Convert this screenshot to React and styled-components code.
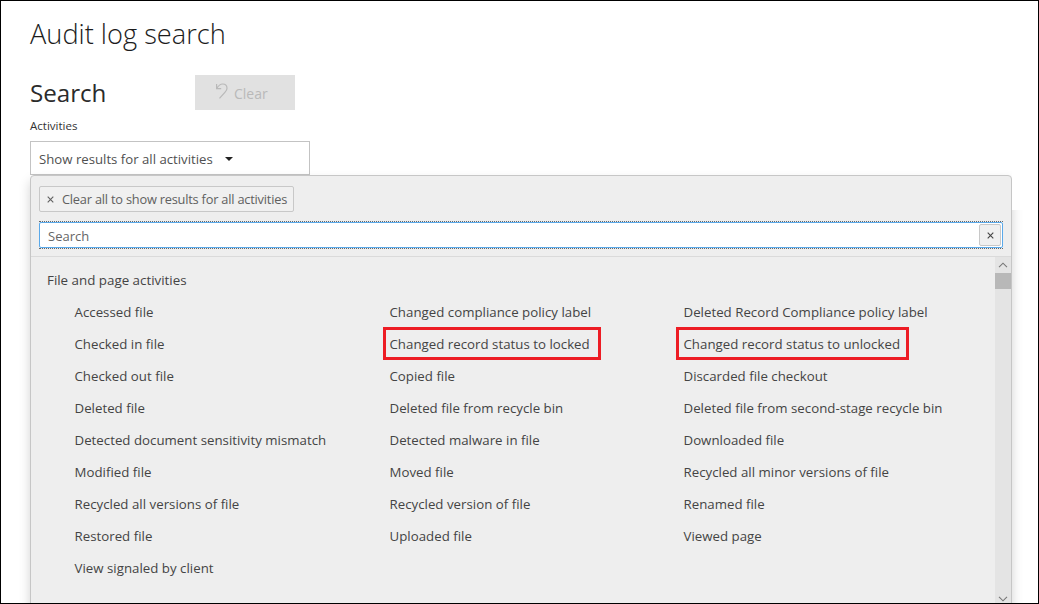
import React from "react";
import styled, { createGlobalStyle } from "styled-components";

const Global = createGlobalStyle`
  * { box-sizing: border-box; }
  body { margin: 0; background: #fff; font-family: "Open Sans", "Noto Sans", sans-serif; }
  button, input { font-family: inherit; margin: 0; }
`;

const Frame = styled.main`
  display: flex;
  flex-direction: column;
  width: 1039px;
  height: 604px;
  padding: 16px 26px 0 29px;
  overflow: hidden;
  border: 1px solid #000;
  background: #fff;
`;

const Title = styled.h1`
  margin: 0;
  height: 34px;
  line-height: 34px;
  font-size: 27.2px;
  font-weight: 300;
  color: #1c1c1c;
`;

const HeadingRow = styled.div`
  display: flex;
  height: 35px;
  margin-top: 24px;
`;

const Heading = styled.h2`
  margin: 0;
  width: 165px;
  line-height: 35px;
  font-size: 24.2px;
  font-weight: 400;
  letter-spacing: -0.05px;
  color: #2b2b2b;
`;

const ClearButton = styled.button`
  display: flex;
  align-items: center;
  width: 100px;
  height: 35px;
  padding: 0 0 0 20px;
  gap: 5px;
  border: 0;
  background: #e1e1e1;
  color: #b9b9b9;
  font-size: 14px;
  line-height: 20px;
  svg { margin-top: -3px; }
  span { padding-top: 3px; }
`;

const Label = styled.label`
  height: 16px;
  margin-top: 8px;
  line-height: 16px;
  font-size: 11.5px;
  color: #333;
`;

const Select = styled.button`
  display: flex;
  align-items: center;
  flex: none;
  width: 280px;
  height: 34px;
  margin-top: 7px;
  padding: 2px 0 0 8px;
  border: 1px solid #c3c3c3;
  background: #fff;
  color: #505050;
  font-size: 13.2px;
  line-height: 20px;
  svg { margin-left: 12px; }
`;

const Panel = styled.section`
  position: relative;
  display: flex;
  flex-direction: column;
  flex: none;
  width: 982px;
  height: 440px;
  border: 1px solid #c6c6c6;
  border-radius: 4px 4px 0 0;
  background: #eee;
  box-shadow: 0 6px 12px rgba(0, 0, 0, 0.175);
`;

const ShadowMask = styled.div`
  position: absolute;
  top: -6px;
  left: 981px;
  width: 20px;
  height: 40px;
  background: #fff;
`;

const Toolbar = styled.header`
  height: 81px;
  flex: none;
  padding: 10px 8px 0;
  border-bottom: 1px solid #dadada;
`;

const ClearAll = styled.button`
  display: flex;
  align-items: center;
  width: 255px;
  height: 26px;
  padding: 0 0 0 7px;
  gap: 8px;
  border: 1px solid #c8c8c8;
  border-radius: 2px;
  background: #f0f0f0;
  color: #606060;
  font-size: 12.8px;
  line-height: 20px;
  letter-spacing: -0.21px;
  white-space: nowrap;
`;

const SearchBox = styled.div`
  display: flex;
  width: 964px;
  height: 28px;
  margin-top: 9px;
  border: dotted #666;
  border-width: 1px 0;
`;

const SearchField = styled.div`
  display: flex;
  align-items: center;
  flex: 1;
  padding: 0 1px 0 8px;
  border: 1px solid #5aa9ea;
  border-radius: 2px;
  background: #fff;
`;

const SearchInput = styled.input`
  flex: 1;
  height: 22px;
  padding: 2px 0 0;
  border: 0;
  outline: 0;
  background: transparent;
  font-size: 13px;
  &::placeholder { color: #666; opacity: 1; }
`;

const ResetButton = styled.button`
  display: flex;
  align-items: center;
  justify-content: center;
  width: 22px;
  height: 22px;
  padding: 0;
  border: 1px solid #c8c8c8;
  border-radius: 2px;
  background: #f0f0f0;
  color: #444;
`;

const Body = styled.div`
  display: flex;
  height: 346px;
`;

const Content = styled.div`
  flex: 1;
  padding: 7px 0 0 16px;
`;

const GroupName = styled.h3`
  margin: 0;
  font-size: 13.35px;
  font-weight: 400;
  line-height: 32px;
  color: #444;
`;

const ActivityGrid = styled.div`
  display: grid;
  grid-template-columns: 315px 294px 1fr;
  grid-auto-rows: 32px;
  padding-left: 27.5px;
`;

const Activity = styled.div`
  display: flex;
  align-items: center;
  width: ${(p) => (p.$marked ? `${p.$marked}px` : "auto")};
  height: ${(p) => (p.$marked ? "33px" : "32px")};
  margin: ${(p) => (p.$marked ? `-1px 0 0 -${p.$inset}px` : 0)};
  padding-left: ${(p) => (p.$marked ? `${p.$inset - 3}px` : 0)};
  border: ${(p) => (p.$marked ? "3px solid #ed1c24" : 0)};
  font-size: 13.25px;
  letter-spacing: 0.02px;
  line-height: 20px;
  white-space: nowrap;
  color: #444;
`;

const Scrollbar = styled.div`
  display: flex;
  flex-direction: column;
  width: 16px;
  background: #e4e4e4;
`;

const ScrollArrow = styled.div`
  display: flex;
  align-items: center;
  justify-content: center;
  height: ${(p) => (p.$end ? "8px" : "16px")};
  margin-top: ${(p) => (p.$end ? "auto" : 0)};
`;

const Thumb = styled.div`
  height: 16px;
  background: #b8b8b8;
`;

const Cross = () => (
  <svg width="7" height="7" viewBox="0 0 7 7" fill="none" stroke="currentColor" strokeWidth="1.1">
    <path d="M.7 .7 6.3 6.3M6.3 .7 .7 6.3" />
  </svg>
);

const Undo = () => (
  <svg width="14" height="18" viewBox="0 0 14 18" fill="none" stroke="#b9b9b9" strokeWidth="1.2">
    <path d="M1.6 2v4.6h4.6M1.8 6.4C3.4 3.6 5.3 2 7.7 2c2.5 0 4.3 1.8 4.3 4.2 0 1.6-.7 2.7-1.9 4L4.5 16.3" />
  </svg>
);

const Chevron = ({ down }) => (
  <svg width="10" height="6" viewBox="0 0 10 6" fill="none" stroke="#777" strokeWidth="1.1">
    <path d={down ? "M1 .8 5 4.8 9 .8" : "M1 5.2 5 1.2 9 5.2"} />
  </svg>
);

const activities = [
  ["Accessed file"],
  ["Changed compliance policy label"],
  ["Deleted Record Compliance policy label"],
  ["Checked in file"],
  ["Changed record status to locked", 218, 6.5],
  ["Changed record status to unlocked", 233, 7.5],
  ["Checked out file"],
  ["Copied file"],
  ["Discarded file checkout"],
  ["Deleted file"],
  ["Deleted file from recycle bin"],
  ["Deleted file from second-stage recycle bin"],
  ["Detected document sensitivity mismatch"],
  ["Detected malware in file"],
  ["Downloaded file"],
  ["Modified file"],
  ["Moved file"],
  ["Recycled all minor versions of file"],
  ["Recycled all versions of file"],
  ["Recycled version of file"],
  ["Renamed file"],
  ["Restored file"],
  ["Uploaded file"],
  ["Viewed page"],
  ["View signaled by client"],
];

export default function App() {
  return (
    <>
      <Global />
      <Frame>
        <Title>Audit log search</Title>
        <HeadingRow>
          <Heading>Search</Heading>
          <ClearButton disabled>
            <Undo />
            <span>Clear</span>
          </ClearButton>
        </HeadingRow>
        <Label>Activities</Label>
        <Select>
          Show results for all activities
          <svg width="8" height="4" viewBox="0 0 8 4">
            <path d="M0 0h8L4 4z" fill="#222" />
          </svg>
        </Select>
        <Panel>
          <ShadowMask />
          <Toolbar>
            <ClearAll>
              <Cross />
              Clear all to show results for all activities
            </ClearAll>
            <SearchBox>
              <SearchField>
                <SearchInput placeholder="Search" />
                <ResetButton aria-label="Reset">
                  <Cross />
                </ResetButton>
              </SearchField>
            </SearchBox>
          </Toolbar>
          <Body>
            <Content>
              <GroupName>File and page activities</GroupName>
              <ActivityGrid>
                {activities.map(([name, marked, inset]) => (
                  <Activity key={name} $marked={marked} $inset={inset}>
                    {name}
                  </Activity>
                ))}
              </ActivityGrid>
            </Content>
            <Scrollbar>
              <ScrollArrow>
                <Chevron />
              </ScrollArrow>
              <Thumb />
              <ScrollArrow $end>
                <Chevron down />
              </ScrollArrow>
            </Scrollbar>
          </Body>
        </Panel>
      </Frame>
    </>
  );
}
